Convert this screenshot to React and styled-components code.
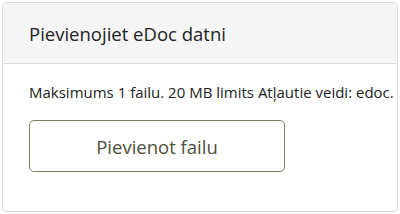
import React from "react";
import styled, { createGlobalStyle } from "styled-components";

const GlobalStyle = createGlobalStyle`
  body {
    margin: 0;
    background: #fff;
    font-family: "Open Sans", "Liberation Sans", sans-serif;
  }
`;

const Page = styled.div`
  padding: 2px;
`;

const Card = styled.div`
  border: 1px solid #dcdcdc;
  border-radius: 4px;
  height: 210px;
  box-sizing: border-box;
  overflow: hidden;
  background: #fff;
`;

const CardHeader = styled.div`
  display: flex;
  align-items: center;
  height: 60px;
  padding: 0 26px;
  background: #f5f5f5;
  border-bottom: 1px solid #dcdcdc;
  font-size: 18.5px;
  color: #222;
`;

const CardBody = styled.div`
  padding: 18px 26px;
`;

const Info = styled.div`
  font-size: 15px;
  line-height: 20px;
  color: #222;
  white-space: nowrap;
`;

const UploadButton = styled.button`
  display: block;
  margin-top: 18px;
  width: 256px;
  height: 52px;
  border: 1.5px solid #7d7d63;
  border-radius: 5px;
  background: #fff;
  font-family: inherit;
  font-size: 18.5px;
  color: #4f4f3a;
  cursor: pointer;
`;

const App = () => {
  return (
    <Page>
      <GlobalStyle />
      <Card>
        <CardHeader>Pievienojiet eDoc datni</CardHeader>
        <CardBody>
          <Info>Maksimums 1 failu. 20 MB limits Atļautie veidi: edoc.</Info>
          <UploadButton>Pievienot failu</UploadButton>
        </CardBody>
      </Card>
    </Page>
  );
};

export default App;
